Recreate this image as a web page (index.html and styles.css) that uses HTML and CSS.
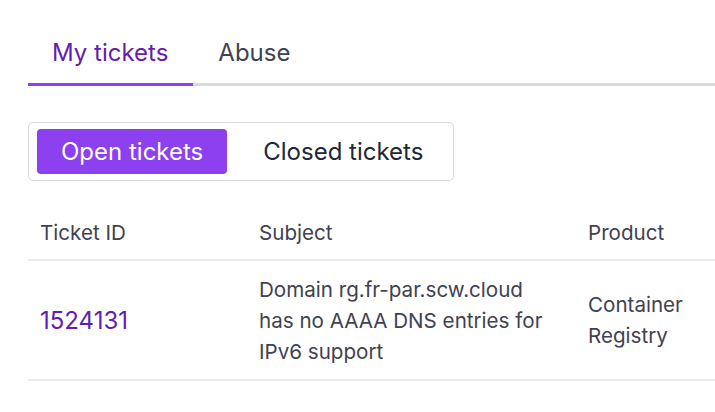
FILE: index.html
```html
<!DOCTYPE html>
<html>
<head>
<meta charset="utf-8">
<link rel="stylesheet" href="styles.css">
</head>
<body>
<div class="page">
  <nav class="tabs">
    <div class="tab active">My tickets</div>
    <div class="tab">Abuse</div>
    <div class="tab-fill"></div>
  </nav>
  <div class="segmented">
    <div class="seg active">Open tickets</div>
    <div class="seg">Closed tickets</div>
  </div>
  <div class="table">
    <div class="row head">
      <div class="cell c1">Ticket ID</div>
      <div class="cell c2">Subject</div>
      <div class="cell c3">Product</div>
    </div>
    <div class="row body">
      <div class="cell c1 id">1524131</div>
      <div class="cell c2">Domain rg.fr-par.scw.cloud has no AAAA DNS entries for IPv6 support</div>
      <div class="cell c3">Container Registry</div>
    </div>
  </div>
</div>
</body>
</html>
```

FILE: styles.css
```css
html, body {
  margin: 0;
  padding: 0;
  background: #ffffff;
  font-family: Inter, "Noto Sans", sans-serif;
  color: #3f4250;
  overflow: hidden;
}
.page {
  padding: 34px 0 0 28px;
}
.tabs {
  display: flex;
  align-items: stretch;
  height: 52px;
}
.tab {
  font-size: 24px;
  line-height: 30px;
  padding: 4px 25px 15px 25px;
  border-bottom: 3px solid #d9dadd;
  color: #3f4250;
}
.tab.active {
  color: #641cb3;
  border-bottom-color: #8c40ef;
  padding-left: 24px;
}
.tab-fill {
  flex: 1;
  border-bottom: 3px solid #d9dadd;
}
.segmented {
  margin-top: 36px;
  display: inline-flex;
  gap: 12px;
  padding: 6px 6px 6px 8px;
  border: 1px solid #d9dadd;
  border-radius: 5px;
  height: 45px;
}
.seg {
  font-size: 24px;
  height: 45px;
  line-height: 45px;
  padding: 0 24px;
  color: #222638;
  border-radius: 4px;
}
.seg.active {
  background: #8c40ef;
  color: #ffffff;
}
.table {
  margin-top: 28px;
}
.row {
  display: flex;
  border-bottom: 2px solid #e9eaeb;
  box-sizing: border-box;
}
.row.head {
  height: 52px;
  align-items: center;
  font-size: 20.6px;
  padding-bottom: 4px;
}
.row.body {
  height: 120px;
  align-items: center;
  font-size: 20.6px;
  line-height: 31px;
}
.cell {
  padding: 0 12px;
  box-sizing: border-box;
  flex: none;
}
.c1 { width: 219px; }
.c2 { width: 329px; padding-right: 20px; }
.c3 { width: 139px; }
.id {
  color: #641cb3;
  font-size: 24px;
}
```
